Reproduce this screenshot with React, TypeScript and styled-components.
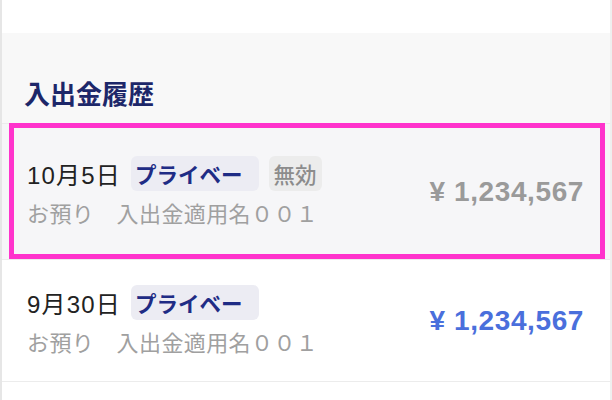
import styled, { createGlobalStyle } from "styled-components";

const GlobalStyle = createGlobalStyle`
  html, body {
    margin: 0;
    padding: 0;
    background: #ffffff;
  }
  body {
    font-family: "Noto Sans CJK JP", "Noto Sans", sans-serif;
  }
`;

const Page = styled.div`
  width: 612px;
  height: 400px;
  box-sizing: border-box;
  border-left: 2px solid #e6e6e6;
  border-right: 2px solid #efefef;
  background: #ffffff;
  overflow: hidden;
`;

const TopBand = styled.div`
  height: 33px;
  background: #ffffff;
`;

const Section = styled.section`
  background: #f8f8f8;
  padding: 42px 22px 12px;
`;

const Heading = styled.h2`
  margin: 0;
  font-size: 26px;
  line-height: 36px;
  font-weight: 700;
  color: #1d2769;
`;

const List = styled.ul`
  margin: 0;
  padding: 0;
  list-style: none;
  border-top: 1px solid #ececec;
  border-bottom: 1px solid #ececec;
`;

const Row = styled.li<{ $selected?: boolean }>`
  position: relative;
  display: flex;
  align-items: center;
  justify-content: space-between;
  box-sizing: border-box;
  height: ${(p) => (p.$selected ? "135px" : "122px")};
  padding: 0 26px 0 25px;
  background: ${(p) => (p.$selected ? "#f6f6f8" : "#ffffff")};

  & + & {
    border-top: 1px solid #ececec;
  }

  ${(p) =>
    p.$selected &&
    `
    &::after {
      content: "";
      position: absolute;
      top: -1px;
      bottom: 0;
      left: 7px;
      right: 5px;
      border: 5px solid #ff33cc;
      pointer-events: none;
    }
  `}
`;

const Info = styled.div`
  display: flex;
  flex-direction: column;
  gap: 5px;
`;

const TopLine = styled.div`
  display: flex;
  align-items: center;
  gap: 10px;
  height: 36px;
`;

const DateText = styled.span`
  font-family: "Liberation Sans", "Noto Sans CJK JP", sans-serif;
  font-size: 24px;
  color: #222222;
  letter-spacing: 1.2px;
`;

const Badge = styled.span<{ $muted?: boolean }>`
  display: inline-flex;
  align-items: center;
  box-sizing: border-box;
  height: 35px;
  border-radius: 6px;
  font-size: 21.5px;
  font-weight: ${(p) => (p.$muted ? 500 : 700)};
  background: ${(p) => (p.$muted ? "#ececec" : "#ececf3")};
  color: ${(p) => (p.$muted ? "#8c8c8c" : "#1f2c85")};
  padding: ${(p) => (p.$muted ? "0 5px" : "0 16px 0 4px")};
`;

const SubText = styled.div`
  font-size: 22px;
  line-height: 32px;
  color: #a0a0a0;
  letter-spacing: 0.4px;
  white-space: pre;
`;

const Amount = styled.div<{ $active?: boolean }>`
  font-family: "Liberation Sans", Arial, sans-serif;
  font-size: 28px;
  font-weight: 700;
  color: ${(p) => (p.$active ? "#4a6fdc" : "#9a9a9a")};
  letter-spacing: 0.6px;
`;

type Entry = {
  date: string;
  disabled?: boolean;
  selected?: boolean;
  amount: string;
};

const entries: Entry[] = [
  { date: "10月5日", disabled: true, selected: true, amount: "¥ 1,234,567" },
  { date: "9月30日", amount: "¥ 1,234,567" },
];

export default function App() {
  return (
    <>
      <GlobalStyle />
      <Page>
        <TopBand />
        <Section>
          <Heading>入出金履歴</Heading>
        </Section>
        <List>
          {entries.map((e) => (
            <Row key={e.date} $selected={e.selected}>
              <Info>
                <TopLine>
                  <DateText>{e.date}</DateText>
                  <Badge>プライベー</Badge>
                  {e.disabled && <Badge $muted>無効</Badge>}
                </TopLine>
                <SubText>{"お預り　入出金適用名００１"}</SubText>
              </Info>
              <Amount $active={!e.disabled}>{e.amount}</Amount>
            </Row>
          ))}
        </List>
      </Page>
    </>
  );
}
